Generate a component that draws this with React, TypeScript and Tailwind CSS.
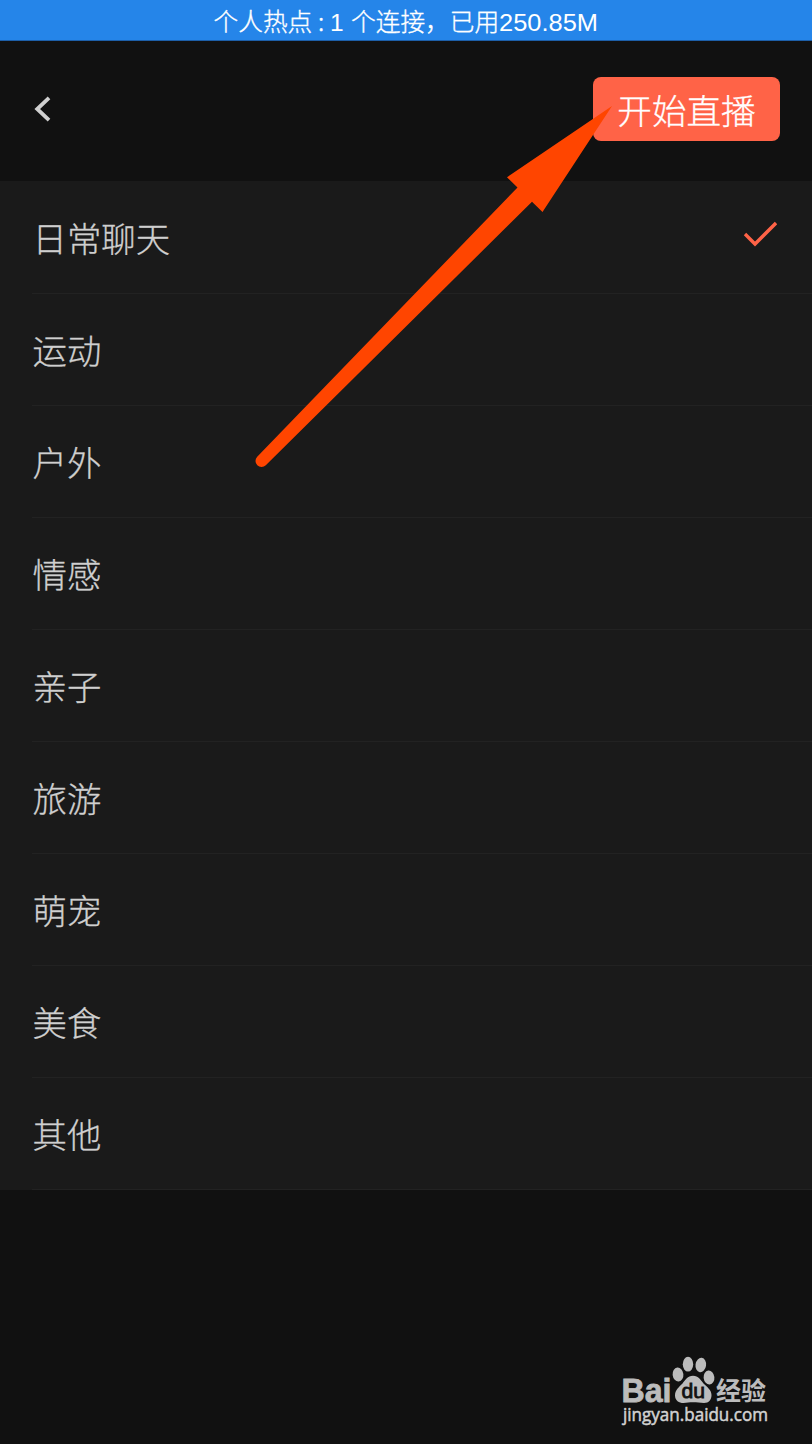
const categories = ['日常聊天', '运动', '户外', '情感', '亲子', '旅游', '萌宠', '美食', '其他'];

function StatusBar() {
  return (
    <div className="flex h-[41px] items-start justify-center border-b border-[#1d5fa8] bg-[#2585e9] text-white">
      <svg width="386" height="40" className="overflow-visible" fill="currentColor" stroke="currentColor" strokeWidth="0.35">
        <text x="0.5" y="31" fontSize="24.7">个人热点</text>
        <text x="105" y="31" fontSize="24.7">:</text>
        <text x="117" y="30.5" fontSize="24.5" strokeWidth="0" className="font-['Liberation_Sans',sans-serif]">1</text>
        <text x="138" y="31" fontSize="24.7">个连接，已用</text>
        <text x="286" y="30.5" fontSize="24.5" strokeWidth="0" textLength="99" lengthAdjust="spacingAndGlyphs" className="font-['Liberation_Sans',sans-serif]">
          250.85M
        </text>
      </svg>
    </div>
  );
}

function Header() {
  return (
    <header className="flex h-[140px] items-start justify-between pt-[36px] pr-[32px] pl-[34px]">
      <button aria-label="返回" className="mt-[18px]">
        <svg width="18" height="28" viewBox="0 0 18 28" fill="none" stroke="#d0d0d0" strokeWidth="3.8">
          <path d="M15 2.8 3.2 14 15 25.2" />
        </svg>
      </button>
      <button className="flex h-[64px] w-[187px] items-center justify-center rounded-lg bg-[#ff6347] pt-px text-[34.6px] leading-none text-white">
        开始直播
      </button>
    </header>
  );
}

function CategoryRow({ name, selected }: { name: string; selected: boolean }) {
  return (
    <li className="h-[112px] pl-8">
      <div className="flex h-full items-center justify-between border-b border-[#222222] pr-[35px] pl-[0.5px]">
        <span className="text-[34.4px] leading-none">{name}</span>
        {selected && (
          <svg className="mb-[7px]" width="34" height="26" viewBox="0 0 34 26" fill="none" stroke="#ff6347" strokeWidth="3.4">
            <path d="M2 13 12 23 33 2" />
          </svg>
        )}
      </div>
    </li>
  );
}

function PointerArrow() {
  return (
    <svg className="pointer-events-none absolute top-[100px] left-[250px]" width="370" height="374" viewBox="250 100 370 374" fill="#ff4500">
      <path d="M612 106 507 177.3 517.5 187.5 257.2 456.8A5.9 5.9 0 0 0 265.8 465.2L532 201.8 542.5 212Z" />
    </svg>
  );
}

function Watermark() {
  return (
    <svg className="absolute top-[1350px] left-[615px]" width="165" height="85" viewBox="615 1350 165 85" fill="#bcbcbc">
      <text x="621.5" y="1402" fontSize="33" fontWeight="700" textLength="50" lengthAdjust="spacingAndGlyphs" stroke="#bcbcbc" strokeWidth="0.8" className="font-['Liberation_Sans',sans-serif]">
        Bai
      </text>
      <ellipse cx="678" cy="1374.5" rx="5.4" ry="7" transform="rotate(-6 678 1374.5)" />
      <ellipse cx="688" cy="1364.2" rx="5.2" ry="7.4" />
      <ellipse cx="700.8" cy="1365" rx="5.3" ry="7.2" transform="rotate(8 700.8 1365)" />
      <ellipse cx="709" cy="1377.5" rx="5.4" ry="7" transform="rotate(-6 709 1377.5)" />
      <path d="M693 1375.8C687.5 1375.8 685.5 1380 682.5 1383.5C679 1387 675 1390 675 1395.5C675 1400.5 679 1403 683.5 1403C687 1403 689 1402.3 693 1402.3C697 1402.3 700 1403 704 1403C709 1403 711.5 1399.5 711.5 1395C711.5 1390 707 1387 703.5 1383.5C700.5 1380 698.5 1375.8 693 1375.8Z" />
      <text x="681.5" y="1398.3" fontSize="20" fontWeight="400" fill="#111111" stroke="#111111" strokeWidth="0.8" textLength="23.5" lengthAdjust="spacingAndGlyphs" className="font-['Liberation_Sans',sans-serif]">
        du
      </text>
      <text x="716" y="1400" fontSize="25" fontWeight="700" textLength="50" lengthAdjust="spacingAndGlyphs">经验</text>
      <text x="623" y="1421" fontSize="17.5" fontWeight="400" fill="#d2d2d2" stroke="#d2d2d2" strokeWidth="0.5" textLength="145" lengthAdjust="spacingAndGlyphs" className="font-['Open_Sans',sans-serif]">
        jingyan.baidu.com
      </text>
    </svg>
  );
}

export default function App() {
  return (
    <div className="relative h-[1444px] w-[812px] overflow-hidden bg-[#111111] font-['Noto_Sans_CJK_SC',sans-serif] font-light text-[#cfcfcf] [-webkit-text-stroke:0.3px]">
      <StatusBar />
      <Header />
      <ul className="bg-[#1a1a1a] pt-px">
        {categories.map((name, index) => (
          <CategoryRow key={name} name={name} selected={index === 0} />
        ))}
      </ul>
      <PointerArrow />
      <Watermark />
    </div>
  );
}
